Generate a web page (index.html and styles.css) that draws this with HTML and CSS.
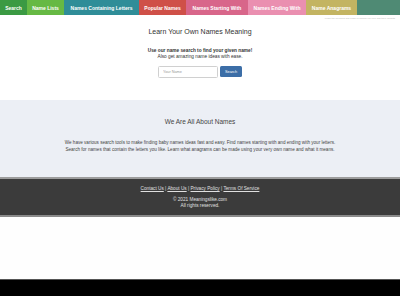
FILE: index.html
```html
<!DOCTYPE html>
<html lang="en">
<head>
<meta charset="utf-8">
<title>Meaningslike</title>
<link rel="stylesheet" href="styles.css">
</head>
<body>
<nav class="nav">
  <a class="nav-item c-search" href="#">Search</a>
  <a class="nav-item c-lists" href="#">Name Lists</a>
  <a class="nav-item c-contain" href="#">Names Containing Letters</a>
  <a class="nav-item c-popular" href="#">Popular Names</a>
  <a class="nav-item c-start" href="#">Names Starting With</a>
  <a class="nav-item c-end" href="#">Names Ending With</a>
  <a class="nav-item c-anagram" href="#">Name Anagrams</a>
  <span class="nav-fill"></span>
</nav>
<div class="tagline">Learn the meaning and origin of names you love and their variants</div>
<section class="hero">
  <h1 class="hero-title">Learn Your Own Names Meaning</h1>
  <p class="hero-lead">Use our name search to find your given name!</p>
  <p class="hero-sub">Also get amazing name ideas with ease.</p>
  <form class="search-form">
    <input class="search-input" type="text" placeholder="Your Name">
    <button class="search-btn" type="button">Search</button>
  </form>
</section>
<section class="about">
  <h2 class="about-title">We Are All About Names</h2>
  <p class="about-text">We have various search tools to make finding baby names ideas fast and easy. Find names starting with and ending with your letters.<br>Search for names that contain the letters you like. Learn what anagrams can be made using your very own name and what it means.</p>
</section>
<footer class="footer">
  <p class="footer-links"><a href="#">Contact Us</a> | <a href="#">About Us</a> | <a href="#">Privacy Policy</a> | <a href="#">Terms Of Service</a></p>
  <p class="footer-copy">© 2021 Meaningslike.com<br>All rights reserved.</p>
</footer>
<div class="spacer"></div>
<div class="bottom-bar"></div>
</body>
</html>
```
FILE: styles.css
```css
html, body {
  margin: 0;
  padding: 0;
  background: #ffffff;
  font-family: "Liberation Sans", Arial, sans-serif;
}
.nav {
  display: flex;
  height: 15px;
}
.nav-item {
  display: flex;
  align-items: center;
  justify-content: center;
  color: #ffffff;
  text-decoration: none;
  font-size: 5px;
  font-weight: bold;
  padding: 0;
  white-space: nowrap;
}
.c-search { background: #3b9a43; width: 27px; }
.c-lists { background: #66b944; width: 37px; }
.c-contain { background: #2f8d98; width: 75px; }
.c-popular { background: #cf5048; width: 47px; }
.c-start { background: #d8668a; width: 62px; }
.c-end { background: #ea8fb0; width: 58px; }
.c-anagram { background: #c3b462; width: 51px; }
.nav-fill { flex: 1; background: #4f8a74; }
.tagline {
  text-align: right;
  font-size: 2.4px;
  color: #b8b8b8;
  padding: 2px 5px 0 0;
  height: 4px;
}
.hero {
  text-align: center;
  color: #333333;
  padding: 6px 0 0;
  height: 73px;
}
.hero-title {
  font-size: 7px;
  font-weight: normal;
  margin: 0 0 11px;
  line-height: 9px;
}
.hero-lead {
  font-size: 4.75px;
  font-weight: bold;
  margin: 0;
  line-height: 7px;
}
.hero-sub {
  font-size: 4.75px;
  margin: 0;
  line-height: 6px;
}
.search-form {
  display: flex;
  justify-content: center;
  gap: 2px;
  margin-top: 6px;
}
.search-input {
  box-sizing: border-box;
  width: 60px;
  height: 12px;
  border: 1px solid #d0d0d0;
  border-radius: 1.5px;
  font-family: inherit;
  font-size: 3.8px;
  padding: 0 4px;
  color: #555;
}
.search-input::placeholder { color: #999; }
.search-btn {
  box-sizing: border-box;
  width: 22px;
  height: 11px;
  border: none;
  border-radius: 1.5px;
  background: #3c6ea7;
  color: #ffffff;
  font-family: inherit;
  font-size: 3.8px;
  padding: 0;
}
.about {
  background: #eceff5;
  text-align: center;
  color: #444444;
  height: 77px;
  padding-top: 17px;
  box-sizing: border-box;
}
.about-title {
  font-size: 6.5px;
  font-weight: normal;
  margin: 0 0 13px;
  line-height: 9px;
}
.about-text {
  font-size: 4.6px;
  line-height: 7px;
  margin: 0;
}
.footer {
  background: #3b3b3b;
  border-top: 2px solid #9c9c9c;
  border-bottom: 2px solid #8a8a8a;
  color: #e0e0e0;
  text-align: center;
  height: 40px;
  padding-top: 7px;
  box-sizing: border-box;
}
.footer-links {
  font-size: 4.7px;
  margin: 0 0 5px;
  line-height: 6px;
}
.footer-links a { color: #e0e0e0; }
.footer-copy {
  font-size: 4.7px;
  line-height: 5.5px;
  margin: 0;
}
.spacer {
  height: 62px;
  background: #fefefe;
}
.bottom-bar {
  height: 18px;
  background: #000000;
  border-top: 1px solid #555555;
}
```
